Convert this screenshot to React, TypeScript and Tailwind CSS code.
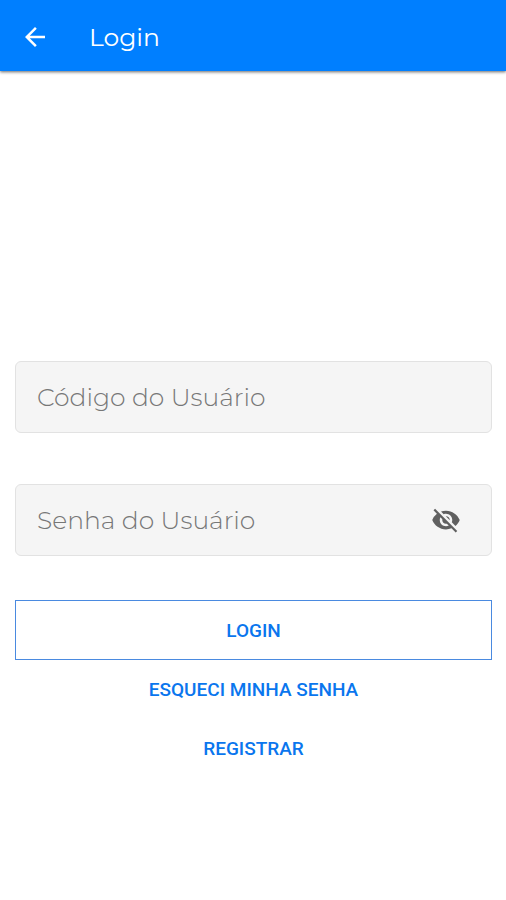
import React, { useState } from 'react';
import { MdArrowBack, MdVisibility, MdVisibilityOff } from 'react-icons/md';

const inputClass =
  "w-full min-w-0 bg-transparent py-4 pl-[21px] font-['Montserrat','Open_Sans',sans-serif] text-[25px] leading-[38px] font-light text-gray-800 outline-none placeholder:text-[#777777]";

const App: React.FC = () => {
  const [userCode, setUserCode] = useState('');
  const [password, setPassword] = useState('');
  const [showPassword, setShowPassword] = useState(false);

  return (
    <div className="min-h-screen bg-white font-['Roboto',sans-serif]">
      <header className="flex h-[71px] items-center bg-[#007fff] px-5 pt-0.5 text-white shadow-[0_1px_3px_rgba(0,0,0,0.6)]">
        <button type="button" aria-label="Voltar" className="flex h-8 w-[30px] items-center justify-center">
          <MdArrowBack className="h-[30px] w-[30px]" />
        </button>
        <h1 className="ml-[39px] font-['Montserrat','Open_Sans',sans-serif] text-[25px] leading-8 font-normal">Login</h1>
      </header>

      <form className="pt-[290px] pr-[14px] pl-[15px]" onSubmit={e => e.preventDefault()}>
        <div className="rounded-md border border-[#e2e2e2] bg-[#f5f5f5]">
          <input
            type="text"
            aria-label="Código do Usuário"
            placeholder="Código do Usuário"
            value={userCode}
            onChange={e => setUserCode(e.target.value)}
            className={inputClass}
          />
        </div>

        <div className="mt-[51px] flex items-center rounded-md border border-[#e2e2e2] bg-[#f5f5f5] pr-[30px]">
          <input
            type={showPassword ? 'text' : 'password'}
            aria-label="Senha do Usuário"
            placeholder="Senha do Usuário"
            value={password}
            onChange={e => setPassword(e.target.value)}
            className={inputClass}
          />
          <button
            type="button"
            aria-label={showPassword ? 'Ocultar senha' : 'Mostrar senha'}
            onClick={() => setShowPassword(!showPassword)}
            className="shrink-0 text-[#606060]"
          >
            {showPassword ? <MdVisibility className="h-[30px] w-[30px]" /> : <MdVisibilityOff className="h-[30px] w-[30px]" />}
          </button>
        </div>

        <div className="mt-11 flex flex-col text-[19px] font-medium text-[#0a76ee]">
          <button type="submit" className="h-[60px] border border-[#4a8ae0] pt-0.5">LOGIN</button>
          <button type="button" className="h-[59px] pt-0.5">ESQUECI MINHA SENHA</button>
          <button type="button" className="h-[59px] pt-0.5">REGISTRAR</button>
        </div>
      </form>
    </div>
  );
};

export default App;
